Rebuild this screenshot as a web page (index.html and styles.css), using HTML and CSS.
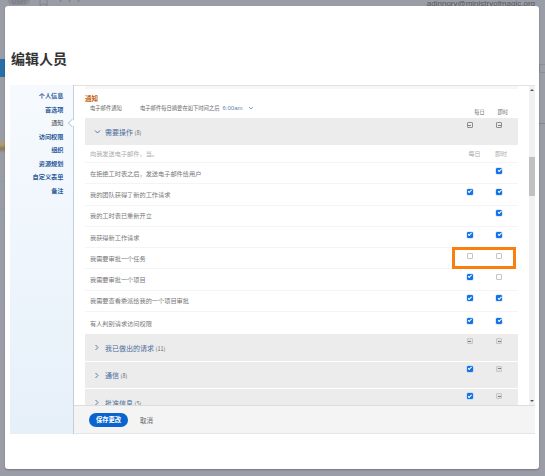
FILE: index.html
```html
<!DOCTYPE html>
<html lang="zh-CN">
<head>
    <meta charset="UTF-8">
    <meta name="viewport" content="width=device-width, initial-scale=1.0">
    <title>编辑人员</title>
    <link rel="stylesheet" href="styles.css">
</head>
<body>
<div class="backdrop">
    <div class="topbar">
        <span class="user-pill">User</span>
        <svg class="bookmark" width="9" height="6" viewBox="0 0 9 6"><path d="M1 0v5.500l3.500-2 3.500 2V0" fill="none" stroke="#7f838c"/></svg>
        <span class="dots">···</span>
        <span class="email">adjnnory@ministryofmagic.org</span>
    </div>
    <div class="left-blue"></div>
    <div class="left-photo"></div>
    <div class="left-line one"></div>
    <div class="left-line two"></div>
    <div class="right-tab"></div>
    <div class="right-line"></div>
</div>

<div class="modal">
    <h1 class="title">编辑人员</h1>
    <div class="panel">
        <nav class="sidebar">
            <a class="nav-link">个人信息</a>
            <a class="nav-link">首选项</a>
            <a class="nav-link current">通知</a>
            <a class="nav-link">访问权限</a>
            <a class="nav-link">组织</a>
            <a class="nav-link">资源规划</a>
            <a class="nav-link">自定义表单</a>
            <a class="nav-link">备注</a>
        </nav>
        <div class="content">
            <div class="scroll-area">
                <div class="scroll-body">
                    <div class="top-band"></div>
                    <h2 class="section-title">通知</h2>
                    <div class="email-line">
                        <span class="email-label">电子邮件通知</span>
                        <span>电子邮件每日摘要在如下时间之后</span>
                        <span class="time">6:00am</span>
                        <svg class="time-caret" width="6" height="4" viewBox="0 0 6 4"><path d="M1 1l2 2 2-2" fill="none" stroke="#5f86b5" stroke-width=".8"/></svg>
                        <span class="top-heads"><span>每日</span><span>即时</span></span>
                    </div>

                    <div class="group">
                        <svg class="chevron" width="7" height="6" viewBox="0 0 7 6"><path d="M1 1.500l2.500 2.500L6 1.500" fill="none" stroke="#54769f" stroke-width="1"/></svg>
                        <span class="group-name">需要操作 <small>(8)</small></span>
                        <span class="box minus outline"></span>
                        <span class="box minus outline"></span>
                    </div>

                    <div class="row head-row">
                        <span>向我发送电子邮件，当。</span>
                        <span class="col-head">每日</span>
                        <span class="col-head">即时</span>
                    </div>
                    <div class="row">
                        <span>在拒绝工时表之后，发送电子邮件给用户</span>
                        <span></span>
                        <span class="box on"></span>
                    </div>
                    <div class="row">
                        <span>我的团队获得了新的工作请求</span>
                        <span class="box on"></span>
                        <span class="box on"></span>
                    </div>
                    <div class="row">
                        <span>我的工时表已重新开立</span>
                        <span></span>
                        <span class="box on"></span>
                    </div>
                    <div class="row">
                        <span>我获得新工作请求</span>
                        <span class="box on"></span>
                        <span class="box on"></span>
                    </div>
                    <div class="row">
                        <span>我需要审批一个任务</span>
                        <span class="box"></span>
                        <span class="box"></span>
                    </div>
                    <div class="row">
                        <span>我需要审批一个项目</span>
                        <span class="box on"></span>
                        <span class="box"></span>
                    </div>
                    <div class="row">
                        <span>我需要查看委派给我的一个项目审批</span>
                        <span class="box on"></span>
                        <span class="box on"></span>
                    </div>
                    <div class="row last-row">
                        <span>有人判别请求访问权限</span>
                        <span class="box on"></span>
                        <span class="box on"></span>
                    </div>

                    <div class="group">
                        <svg class="chevron" width="6" height="7" viewBox="0 0 6 7"><path d="M1.500 1L4 3.500 1.500 6" fill="none" stroke="#54769f" stroke-width="1"/></svg>
                        <span class="group-name">我已做出的请求 <small>(11)</small></span>
                        <span class="box minus"></span>
                        <span class="box minus"></span>
                    </div>
                    <div class="group">
                        <svg class="chevron" width="6" height="7" viewBox="0 0 6 7"><path d="M1.500 1L4 3.500 1.500 6" fill="none" stroke="#54769f" stroke-width="1"/></svg>
                        <span class="group-name">通信 <small>(8)</small></span>
                        <span class="box on"></span>
                        <span class="box minus"></span>
                    </div>
                    <div class="group">
                        <svg class="chevron" width="6" height="7" viewBox="0 0 6 7"><path d="M1.500 1L4 3.500 1.500 6" fill="none" stroke="#54769f" stroke-width="1"/></svg>
                        <span class="group-name">批准信息 <small>(5)</small></span>
                        <span class="box on"></span>
                        <span class="box minus"></span>
                    </div>

                    <div class="callout"></div>
                </div>
                <div class="scrollbar">
                    <span class="arrow up"></span>
                    <span class="thumb"></span>
                    <span class="arrow down"></span>
                </div>
            </div>
            <div class="footer">
                <button class="save">保存更改</button>
                <span class="cancel">取消</span>
            </div>
        </div>
    </div>
</div>
</body>
</html>
```

FILE: styles.css
```css
body {
    font-family: "Noto Sans CJK SC", "Liberation Sans", sans-serif;
    margin: 0;
    width: 545px;
    height: 476px;
    overflow: hidden;
    position: relative;
    background-color: #9a9da6;
    color: #666;
}

.backdrop {
    height: 476px;
}

.topbar {
    display: flex;
    align-items: flex-start;
    height: 6px;
    overflow: hidden;
    padding-left: 8px;
    font-size: 8px;
    color: #5a5d66;
}

.user-pill {
    width: 22px;
    height: 5px;
    background: #8b8e96;
    border-radius: 0 0 6px 6px;
    color: #74777f;
    font-size: 7px;
    line-height: 3px;
    text-align: center;
}

.bookmark {
    margin-left: 9px;
}

.dots {
    margin-left: 8px;
    line-height: 2px;
    font-size: 9px;
    color: #83868e;
}

.email {
    margin-left: auto;
    margin-right: 10px;
    font-family: "Liberation Sans", sans-serif;
    font-size: 8px;
    line-height: 7px;
    color: #55585f;
}

.left-blue {
    position: absolute;
    left: 0;
    top: 59px;
    width: 5px;
    height: 18px;
    background: #2a6ea8;
}

.left-photo {
    position: absolute;
    left: 0;
    top: 139px;
    width: 5px;
    height: 14px;
    background: linear-gradient(#9a9da6, #b09a78 40%, #8c7a60 70%, #9a9da6);
}

.left-line {
    position: absolute;
    left: 0;
    width: 5px;
    height: 1px;
    background: #8a9db5;
}

.left-line.one {
    top: 181px;
}

.left-line.two {
    top: 208px;
}

.right-tab {
    position: absolute;
    right: 0;
    top: 64px;
    width: 6px;
    height: 9px;
    border: 1px solid #8a8d95;
    border-right: 0;
    border-radius: 2px 0 0 2px;
    box-sizing: border-box;
}

.right-line {
    position: absolute;
    right: 0;
    top: 123px;
    width: 6px;
    height: 1px;
    background: #84878f;
}

.modal {
    position: absolute;
    left: 5px;
    top: 6px;
    width: 534px;
    height: 463px;
    box-sizing: border-box;
    padding: 0 4px 35px 5px;
    display: flex;
    flex-direction: column;
    background: white;
    border-radius: 3px;
    box-shadow: 0 1px 2px rgba(0, 0, 0, 0.25);
}

.title {
    margin: 0;
    height: 79px;
    box-sizing: border-box;
    padding: 41px 0 0 1px;
    font-size: 14px;
    line-height: 22px;
    font-weight: 700;
    color: #333;
}

.panel {
    flex: 1;
    display: flex;
    min-height: 0;
}

.sidebar {
    width: 64px;
    flex-shrink: 0;
    box-sizing: border-box;
    padding: 4px 9.500px 0 0;
    display: flex;
    flex-direction: column;
    align-items: flex-end;
    background: linear-gradient(#f6fafe, #e6f0f9);
    border-right: 1px solid #c3d0dc;
    position: relative;
}

.nav-link {
    height: 13.500px;
    line-height: 13.500px;
    font-size: 6.200px;
    font-weight: 700;
    color: #2f5c9a;
}

.nav-link.current {
    color: #444;
    font-weight: 400;
    position: relative;
}

.nav-link.current::after {
    content: "";
    position: absolute;
    right: -11.500px;
    top: 4px;
    width: 5px;
    height: 5px;
    background: white;
    border-left: 1px solid #c3d0dc;
    border-bottom: 1px solid #c3d0dc;
    transform: rotate(45deg);
}

.content {
    flex: 1;
    min-width: 0;
    display: flex;
    flex-direction: column;
    border-top: 1px solid #e2e2e2;
}

.scroll-area {
    flex: 1;
    min-height: 0;
    display: flex;
    overflow: hidden;
}

.scroll-body {
    width: 433px;
    margin-left: 11px;
    position: relative;
    overflow: hidden;
}

.top-band {
    height: 3px;
    background: #f7f7f7;
}

.section-title {
    margin: 5px 0 0;
    font-size: 6.500px;
    line-height: 9px;
    font-weight: 700;
    color: #c4600e;
}

.email-line {
    display: flex;
    align-items: flex-start;
    height: 15px;
    padding-left: 5px;
    font-size: 5.300px;
    line-height: 10px;
    color: #666;
    position: relative;
}

.email-label {
    width: 50px;
}

.time {
    margin-left: 3px;
    margin-right: 6px;
    font-family: "Liberation Sans", sans-serif;
    font-size: 6px;
    color: #5f86b5;
}

.time-caret {
    margin-top: 3px;
}

.top-heads {
    position: absolute;
    right: 10px;
    top: 5px;
    display: flex;
    gap: 13px;
    font-size: 5.200px;
    line-height: 8px;
    color: #666;
}

.group {
    display: grid;
    grid-template-columns: 9px 1fr 6px 23.500px 6px;
    align-items: center;
    height: 26.500px;
    margin-bottom: 1px;
    padding: 0 16px 0 9px;
    background: #ececec;
}

.group .chevron {
    margin-top: 1px;
}

.group-name {
    margin-left: 2px;
    padding-top: 1px;
    font-size: 7px;
    color: #4a6d9c;
}

.group-name small {
    font-size: 5.500px;
    color: #666;
}

.group .box {
    margin-bottom: 12px;
}

.group .box:last-child {
    grid-column: 5;
}

.row {
    display: grid;
    grid-template-columns: 1fr 6px 6px;
    column-gap: 23.500px;
    align-items: center;
    height: 21.300px;
    box-sizing: border-box;
    padding: 0 16px 0 5px;
    border-bottom: 1px solid #f4f4f4;
    font-size: 6.200px;
    color: #777;
}

.head-row {
    height: 17.500px;
    color: #aaa;
}

.last-row {
    height: 22px;
    border-bottom: 0;
}

.col-head {
    justify-self: start;
    margin-left: 2px;
    white-space: nowrap;
    font-size: 6px;
    color: #aaa;
}

.col-head:last-child {
    margin-left: -1px;
}

.row .box {
    margin-bottom: 5px;
}

.box {
    display: block;
    width: 6px;
    height: 6px;
    box-sizing: border-box;
    border: 1px solid #c4c4c4;
    border-radius: 1px;
    background: white;
    position: relative;
}

.box.on {
    border-color: #1473e6;
    background: #1473e6;
    box-shadow: 0 0 0 0.500px rgba(20, 115, 230, 0.3);
}

.box.on::after {
    content: "";
    position: absolute;
    left: 0.800px;
    top: 0.200px;
    width: 2.500px;
    height: 1.200px;
    border-left: 1px solid white;
    border-bottom: 1px solid white;
    transform: rotate(-45deg);
}

.box.minus {
    background: #e2e2e2;
    border-color: #c8c8c8;
}

.box.minus.outline {
    background: transparent;
    border-color: #8e8e8e;
}

.box.minus::after {
    content: "";
    position: absolute;
    left: 0.500px;
    right: 0.500px;
    top: 1.500px;
    height: 1px;
    background: #808080;
}

.callout {
    position: absolute;
    left: 367px;
    top: 161px;
    width: 64px;
    height: 22px;
    box-sizing: border-box;
    border: 3px solid #f97f0f;
}

.scrollbar {
    width: 6px;
    margin-left: 11px;
    display: flex;
    flex-direction: column;
    align-items: center;
    background: #f1f1f1;
}

.arrow {
    width: 0;
    height: 0;
    border-left: 2px solid transparent;
    border-right: 2px solid transparent;
}

.arrow.up {
    margin-top: 3px;
    border-bottom: 2px solid #555;
}

.arrow.down {
    margin-top: auto;
    margin-bottom: 3px;
    border-top: 2px solid #555;
}

.thumb {
    width: 6px;
    height: 39px;
    margin-top: 66px;
    background: #c1c1c1;
}

.footer {
    display: flex;
    align-items: center;
    gap: 12px;
    height: 29px;
    flex-shrink: 0;
    box-sizing: border-box;
    padding-left: 15px;
    background: #f4f4f4;
    border-top: 1px solid #ddd;
    border-bottom: 1px solid #e6e6e6;
}

.save {
    width: 39px;
    height: 14px;
    padding: 0;
    border: none;
    border-radius: 7px;
    background: #0b63ce;
    color: white;
    font-family: "Noto Sans CJK SC", sans-serif;
    font-size: 6.300px;
    font-weight: 700;
}

.cancel {
    font-size: 6.500px;
    color: #666;
}
```
